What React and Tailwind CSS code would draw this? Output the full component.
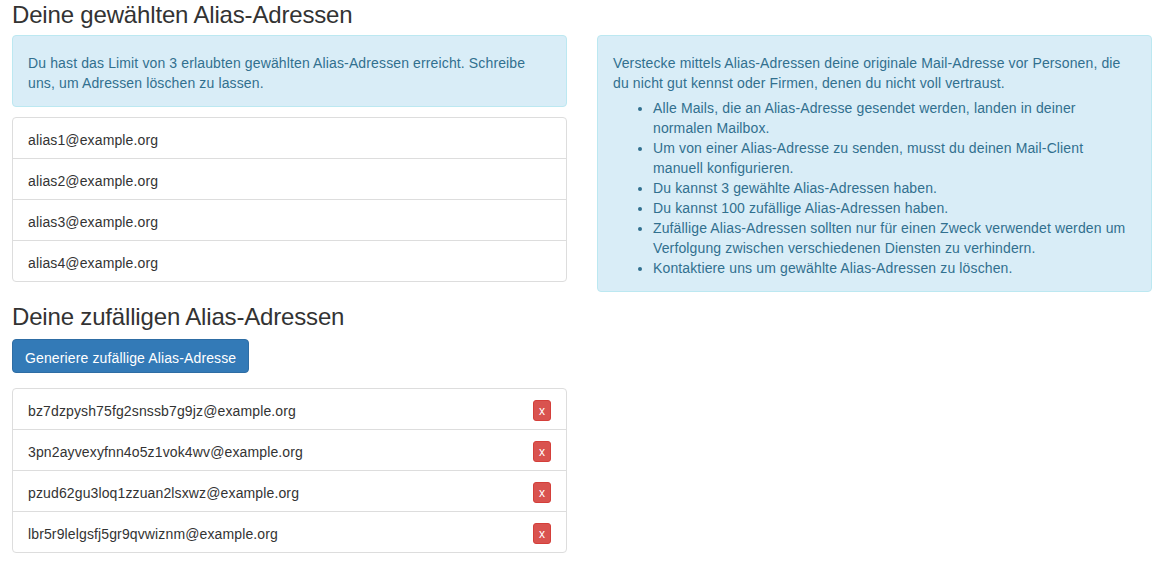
export default function App() {
  const chosen = ["alias1@example.org", "alias2@example.org", "alias3@example.org", "alias4@example.org"];
  const random = [
    "bz7dzpysh75fg2snssb7g9jz@example.org",
    "3pn2ayvexyfnn4o5z1vok4wv@example.org",
    "pzud62gu3loq1zzuan2lsxwz@example.org",
    "lbr5r9lelgsfj5gr9qvwiznm@example.org",
  ];
  return (
    <div
      className="bg-white w-[1170px] h-[565px] overflow-hidden pl-[12px] text-[14px] leading-5 text-[#333] tracking-[0.13px]"
      style={{ fontFamily: '"Liberation Sans", Arial, Helvetica, sans-serif' }}
    >
      <div className="grid grid-cols-[555px_555px] gap-[30px]">
        <div>
          <h3 className="text-[24px] leading-[26px] tracking-[-0.17px] font-normal pt-[2px] mb-[7px]">
            Deine gewählten Alias-Adressen
          </h3>
          <div className="bg-[#d9edf7] border border-[#bce8f1] text-[#31708f] rounded-[4px] px-[15px] pt-[17px] pb-[13px] mb-[10px]">
            Du hast das Limit von 3 erlaubten gewählten Alias-Adressen erreicht. Schreibe uns, um Adressen löschen zu lassen.
          </div>
          <div className="border border-[#ddd] rounded-[4px] divide-y divide-[#ddd]">
            {chosen.map((a) => (
              <div key={a} className="px-[15px] pt-[12px] pb-[8px]">
                {a}
              </div>
            ))}
          </div>
          <h3 className="text-[24px] leading-[26px] tracking-[-0.17px] font-normal mt-[20px] pt-[2px] mb-[9px]">
            Deine zufälligen Alias-Adressen
          </h3>
          <button className="bg-[#337ab7] border border-[#2e6da4] text-white rounded-[4px] px-[12px] pt-[8px] pb-[4px] leading-5 text-[14px] tracking-[0.13px] mb-[15px]">
            Generiere zufällige Alias-Adresse
          </button>
          <div className="border border-[#ddd] rounded-[4px] divide-y divide-[#ddd]">
            {random.map((a) => (
              <div key={a} className="px-[15px] pt-[12px] pb-[8px] flex justify-between items-start">
                <span>{a}</span>
                <span className="-mt-px h-[21px] w-[18px] bg-[#d9534f] border border-[#d43f3a] rounded-[3px] text-white text-[12px] leading-[18px] tracking-normal flex items-center justify-center">
                  x
                </span>
              </div>
            ))}
          </div>
        </div>
        <div className="pt-[35px]">
          <div className="bg-[#d9edf7] border border-[#bce8f1] text-[#31708f] rounded-[4px] px-[15px] pt-[17px] pb-[13px]">
            <p className="mb-[5px]">
              Verstecke mittels Alias-Adressen deine originale Mail-Adresse vor Personen, die du nicht gut kennst oder Firmen, denen du nicht voll vertraust.
            </p>
            <ul className="list-disc pl-10 mb-0">
              <li>Alle Mails, die an Alias-Adresse gesendet werden, landen in deiner normalen Mailbox.</li>
              <li>Um von einer Alias-Adresse zu senden, musst du deinen Mail-Client manuell konfigurieren.</li>
              <li>Du kannst 3 gewählte Alias-Adressen haben.</li>
              <li>Du kannst 100 zufällige Alias-Adressen haben.</li>
              <li>Zufällige Alias-Adressen sollten nur für einen Zweck verwendet werden um Verfolgung zwischen verschiedenen Diensten zu verhindern.</li>
              <li>Kontaktiere uns um gewählte Alias-Adressen zu löschen.</li>
            </ul>
          </div>
        </div>
      </div>
    </div>
  );
}
